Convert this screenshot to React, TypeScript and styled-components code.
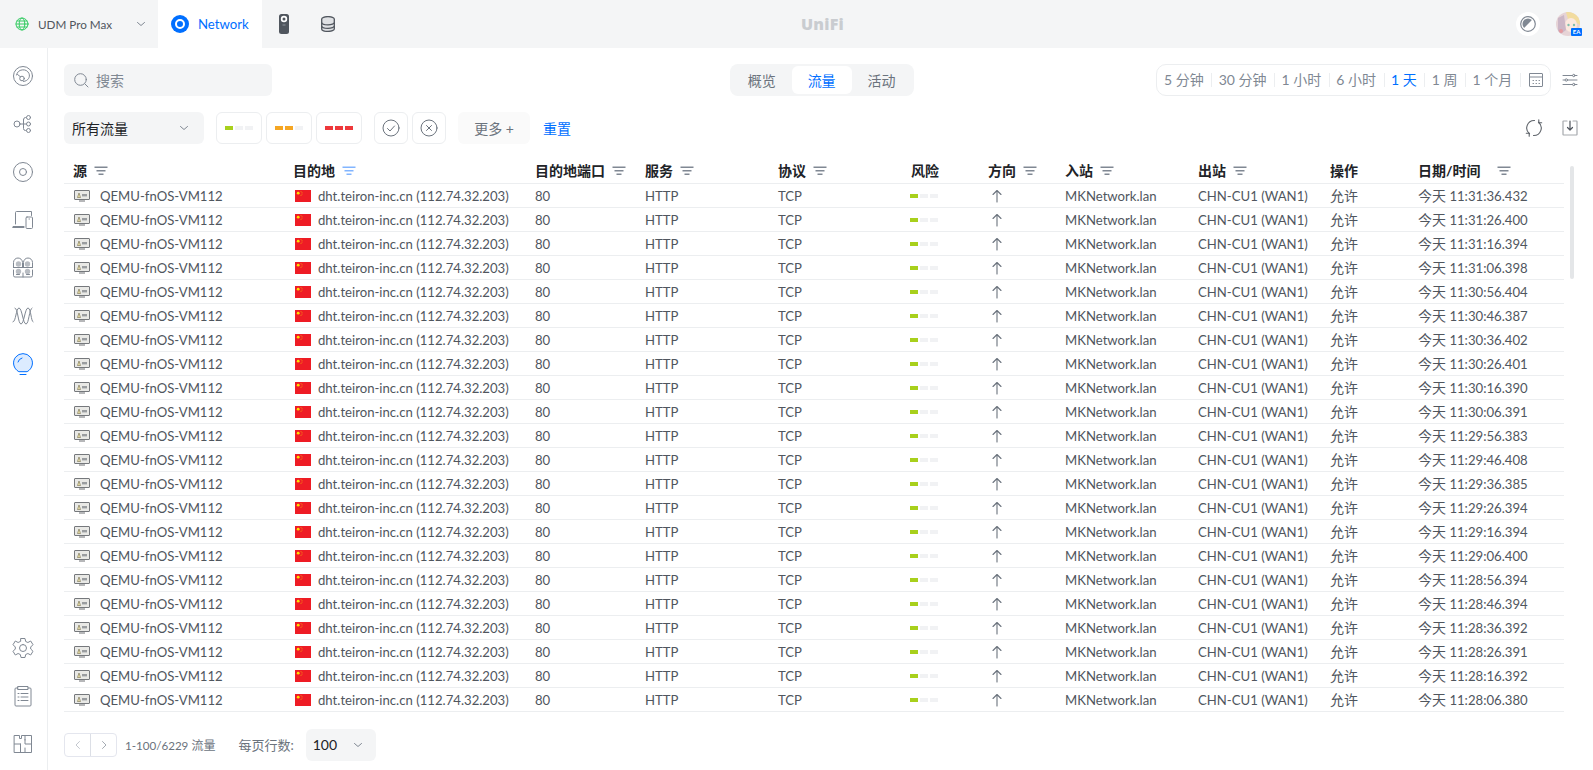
import React, { FC, ReactNode } from "react"
import styled, { createGlobalStyle } from "styled-components"

const GlobalStyle = createGlobalStyle`
  html, body {
    margin: 0;
    height: 100%;
    overflow: hidden;
    background: #fff;
  }
  body {
    font-family: Lato, "Noto Sans CJK SC", sans-serif;
    font-size: 14px;
    color: #50565e;
  }
  * {
    box-sizing: border-box;
  }
`

const Page = styled.div`
  width: 1593px;
  height: 770px;
  display: flex;
  flex-direction: column;
`

const TopBar = styled.header`
  height: 48px;
  flex: none;
  display: flex;
  align-items: center;
  background: #f4f5f6;
`

const SiteSwitch = styled.div`
  width: 158px;
  height: 100%;
  display: flex;
  align-items: center;
  padding-left: 15px;
  color: #50565e;
  font-size: 11.7px;
`

const SiteName = styled.span`
  margin-left: 9px;
  flex: 1;
`

const SiteChevron = styled.span`
  display: flex;
  margin-right: 11px;
`

const ActiveApp = styled.div`
  width: 104px;
  height: 100%;
  background: #fff;
  display: flex;
  align-items: center;
  gap: 9px;
  padding-left: 13px;
  color: #006fff;
  font-size: 13.2px;
`

const AppIcon = styled.div`
  display: flex;
  margin-left: 17px;
  & + & {
    margin-left: 32px;
  }
`

const Logo = styled.div`
  flex: 1;
  text-align: center;
  font-family: "Open Sans", sans-serif;
  font-weight: 800;
  font-size: 16px;
  letter-spacing: 0.2px;
  color: #c9ccd0;
  padding-right: 206px;
`

const ThemeButton = styled.div`
  width: 24px;
  height: 24px;
  border-radius: 50%;
  background: #fff;
  display: flex;
  align-items: center;
  justify-content: center;
  margin-right: 16px;
`

const Avatar = styled.div`
  position: relative;
  width: 24px;
  height: 24px;
  margin-right: 13px;
`

const AvatarBadge = styled.span`
  position: absolute;
  right: -2px;
  bottom: 0;
  width: 11px;
  height: 8px;
  border-radius: 1px;
  background: #006fff;
  color: #fff;
  font-size: 6px;
  font-weight: 700;
  line-height: 8px;
  text-align: center;
`

const Body = styled.div`
  flex: 1;
  display: flex;
  min-height: 0;
`

const SideNav = styled.nav`
  width: 48px;
  flex: none;
  border-right: 1px solid #eceef0;
  display: flex;
  flex-direction: column;
  justify-content: space-between;
  padding: 16px 0 14px;
`

const NavGroup = styled.div`
  display: flex;
  flex-direction: column;
  gap: 24px;
`

const NavItem = styled.div`
  height: 24px;
  display: flex;
  align-items: center;
  justify-content: center;
  padding-right: 1px;
`

const Main = styled.main`
  flex: 1;
  min-width: 0;
  padding: 16px 15px 0 16px;
  display: flex;
  flex-direction: column;
`

const ToolRow = styled.div`
  height: 32px;
  display: flex;
  align-items: center;
  flex: none;
`

const SearchBox = styled.div`
  width: 208px;
  height: 32px;
  border-radius: 6px;
  background: #f4f5f6;
  display: flex;
  align-items: center;
  gap: 7px;
  padding-left: 9px;
  color: #808893;
`

const Segments = styled.div`
  width: 184px;
  height: 32px;
  margin-left: 458px;
  border-radius: 8px;
  background: #f4f5f6;
  display: flex;
  align-items: center;
  padding: 2px;
`

const Segment = styled.div<{ $active?: boolean }>`
  flex: 1;
  height: 28px;
  display: flex;
  align-items: center;
  justify-content: center;
  border-radius: 6px;
  background: ${p => (p.$active ? "#fff" : "transparent")};
  color: ${p => (p.$active ? "#006fff" : "#6b737d")};
`

const RangeBox = styled.div`
  width: 396px;
  height: 32px;
  margin-left: 242px;
  border: 1px solid #eceef0;
  border-radius: 10px;
  display: flex;
  align-items: center;
  padding-left: 1px;
`

const RangeItem = styled.span<{ $active?: boolean }>`
  height: 14px;
  line-height: 14px;
  padding: 0 7.5px 0 6.5px;
  white-space: nowrap;
  border-right: 1px solid #eceef0;
  color: ${p => (p.$active ? "#006fff" : "#808893")};
`

const RangeIcon = styled.span`
  display: flex;
  margin-left: 7px;
`

const TuneIcon = styled.span`
  display: flex;
  margin-left: 11px;
`

const FilterRow = styled(ToolRow)`
  margin-top: 16px;
`

const TrafficSelect = styled.div`
  width: 140px;
  height: 32px;
  margin-right: 12px;
  border-radius: 6px;
  background: #f4f5f6;
  display: flex;
  align-items: center;
  justify-content: space-between;
  padding: 0 14px 0 8px;
  color: #212327;
`

const RiskButton = styled.div`
  width: 46px;
  height: 32px;
  margin-right: 4px;
  border: 1px solid #eceef0;
  border-radius: 6px;
  display: flex;
  align-items: center;
  justify-content: center;
`

const RiskBars = styled.div`
  display: flex;
  gap: 2px;
`

const RiskBar = styled.span<{ $color: string }>`
  width: 8px;
  height: 4px;
  background: ${p => p.$color};
`

const RoundButton = styled.div<{ $first?: boolean }>`
  width: 34px;
  height: 32px;
  margin-left: ${p => (p.$first ? "8px" : "4px")};
  border: 1px solid #eceef0;
  border-radius: 6px;
  display: flex;
  align-items: center;
  justify-content: center;
`

const MoreButton = styled.div`
  width: 72px;
  height: 32px;
  margin-left: 12px;
  border-radius: 6px;
  background: #fafafa;
  display: flex;
  align-items: center;
  justify-content: center;
  color: #6b737d;
`

const ResetLink = styled.span`
  margin-left: 13px;
  color: #006fff;
`

const ActionIcons = styled.div`
  margin-left: auto;
  display: flex;
  align-items: center;
  gap: 19px;
`

const TableArea = styled.div`
  margin-top: 15px;
  display: flex;
  flex: none;
`

const Table = styled.table`
  width: 1500px;
  table-layout: fixed;
  border-collapse: collapse;
`

const HeadCell = styled.th`
  height: 24px;
  padding: 0 0 0 9px;
  text-align: left;
  font-weight: 700;
  font-size: 14px;
  line-height: 16px;
  color: #212327;
  border-bottom: 1px solid #eceef0;
  white-space: nowrap;
`

const HeadInner = styled.span`
  display: inline-flex;
  align-items: center;
  gap: 7px;
`

const Cell = styled.td`
  height: 24px;
  padding: 1px 0 0 9px;
  border-bottom: 1px solid #eceef0;
  white-space: nowrap;
  font-size: 13.15px;
  line-height: 16px;
`

const CellInner = styled.span`
  display: flex;
  align-items: center;
  gap: 7px;
`

const SourceInner = styled(CellInner)`
  padding-left: 1px;
`

const SourceName = styled.span`
  margin-left: 3px;
`

const FlagSlot = styled.span`
  display: flex;
  margin-left: 2px;
`

const RiskSlot = styled.span`
  display: flex;
  margin-left: -1px;
`

const ArrowSlot = styled.span`
  display: flex;
  margin-left: 2px;
`

const Han = styled.span`
  font-size: 14px;
  line-height: 16px;
`

const Scrollbar = styled.div`
  width: 4px;
  height: 113px;
  margin: 7px 0 0 6px;
  border-radius: 2px;
  background: #e4e6e8;
`

const Footer = styled.div`
  margin-top: 17px;
  height: 32px;
  flex: none;
  display: flex;
  align-items: center;
  font-size: 13px;
`

const Pager = styled.div`
  width: 53px;
  height: 24px;
  border: 1px solid #e4e6ee;
  border-radius: 4px;
  display: flex;
`

const PagerButton = styled.span<{ $right?: boolean }>`
  flex: 1;
  display: flex;
  align-items: center;
  justify-content: center;
  border-left: ${p => (p.$right ? "1px solid #dcdfe6" : "none")};
`

const PageCount = styled.span`
  margin-left: 8px;
  color: #6b737d;
  font-size: 12px;
`

const PageNumbers = styled.span`
  font-size: 11.6px;
`

const PageLabel = styled.span`
  margin-left: 23px;
  color: #6b737d;
`

const PageSize = styled.div`
  width: 70px;
  height: 32px;
  margin-left: 12px;
  border-radius: 6px;
  background: #f4f5f6;
  display: flex;
  align-items: center;
  justify-content: space-between;
  padding: 0 12px 0 7px;
  color: #212327;
  font-size: 14px;
`

const Stroke: FC<{ size?: number; color?: string; sw?: number; children: ReactNode }> = ({
  size = 24,
  color = "#808893",
  sw = 1,
  children,
}) => (
  <svg
    width={size}
    height={size}
    viewBox={`0 0 ${size} ${size}`}
    fill="none"
    stroke={color}
    strokeWidth={sw}
    strokeLinecap="round"
    strokeLinejoin="round"
  >
    {children}
  </svg>
)

const Chevron: FC<{ color?: string }> = ({ color = "#808893" }) => (
  <Stroke size={12} color={color}>
    <path d="M2.500 4.500 6 7.500l3.500-3" />
  </Stroke>
)

const FilterIcon: FC<{ color?: string }> = ({ color = "#808893" }) => (
  <svg width="14" height="12" viewBox="0 0 14 12" fill={color}>
    <rect x="0.500" y="1.500" width="13" height="1.500" />
    <rect x="2.500" y="5" width="9" height="1.500" />
    <rect x="4.500" y="8.500" width="5" height="1.500" />
  </svg>
)

const DeviceIcon = () => (
  <svg width="16" height="12" viewBox="0 0 16 12">
    <rect x="0.500" y="0.500" width="15" height="9" rx="0.500" fill="#e9e9e6" stroke="#75787c" />
    <path d="M3.500 7.500 5 3l1.500 4.500z" fill="#f5e9b0" stroke="#6f6a4a" strokeWidth="0.600" />
    <rect x="8" y="4" width="5" height="2.400" fill="#9a9da0" />
    <rect x="5" y="10.500" width="6" height="1" fill="#6e7175" />
  </svg>
)

const FlagIcon = () => (
  <svg width="16" height="12" viewBox="0 0 16 12">
    <rect width="16" height="12" fill="#ee1c25" />
    <circle cx="3.200" cy="3.200" r="1.400" fill="#ffde00" />
    <circle cx="6" cy="1.400" r="0.450" fill="#ffde00" />
    <circle cx="7" cy="2.600" r="0.450" fill="#ffde00" />
    <circle cx="7" cy="4" r="0.450" fill="#ffde00" />
    <circle cx="6" cy="5.200" r="0.450" fill="#ffde00" />
  </svg>
)

const Risk: FC<{ level: 1 | 2 | 3 }> = ({ level }) => {
  const color = level === 1 ? "#a8d01c" : level === 2 ? "#f5a623" : "#ee383b"
  return (
    <RiskBars>
      {[1, 2, 3].map(i => (
        <RiskBar key={i} $color={i <= level ? color : "#f1f2f4"} />
      ))}
    </RiskBars>
  )
}

const columns = [
  { title: "源", width: 220, filter: true },
  { title: "目的地", width: 242, filter: true, active: true },
  { title: "目的地端口", width: 110, filter: true },
  { title: "服务", width: 133, filter: true },
  { title: "协议", width: 133, filter: true },
  { title: "风险", width: 77 },
  { title: "方向", width: 77, filter: true },
  { title: "入站", width: 133, filter: true },
  { title: "出站", width: 132, filter: true },
  { title: "操作", width: 88 },
  { title: "日期/时间", width: 155, filter: true, wide: true },
]

const times = [
  "11:31:36.432", "11:31:26.400", "11:31:16.394", "11:31:06.398", "11:30:56.404", "11:30:46.387",
  "11:30:36.402", "11:30:26.401", "11:30:16.390", "11:30:06.391", "11:29:56.383", "11:29:46.408",
  "11:29:36.385", "11:29:26.394", "11:29:16.394", "11:29:06.400", "11:28:56.394", "11:28:46.394",
  "11:28:36.392", "11:28:26.391", "11:28:16.392", "11:28:06.380",
]

const ranges = ["5 分钟", "30 分钟", "1 小时", "6 小时", "1 天", "1 周", "1 个月"]

const navTop = [
  <><circle cx="12" cy="12" r="9.500" /><path d="M5.500 11a6.700 6.700 0 0 1 12.500-1.500c1.400 3.500-.8 7.500-5.500 8" /><circle cx="11" cy="14.500" r="2.300" /><path d="M9.500 12.800 6.500 10.500" /></>,
  <><circle cx="6" cy="12" r="3" /><path d="M9 12h3.500M12.500 7.500v9a2 2 0 0 0 2 2h.5M12.500 7.500a2 2 0 0 1 2-2h.5M12.500 12h2.500" /><circle cx="17.500" cy="5.500" r="2" /><circle cx="17.500" cy="12" r="2" /><circle cx="17.500" cy="18.500" r="2" /></>,
  <><circle cx="12" cy="12" r="9.500" /><circle cx="12" cy="12" r="3.500" /></>,
  <><path d="M4.500 16V4.500a1 1 0 0 1 1-1h15v4" /><path d="M2 19.500h11M2 19.500v-1h11" /><rect x="15" y="9" width="6.500" height="11.500" rx="1" /><path d="M18 11h.5" /></>,
  <>
    <g fill="#b9bdc3" stroke="none">
      <circle cx="7.500" cy="8" r="2.700" />
      <circle cx="16.500" cy="8" r="2.700" />
      <circle cx="7.500" cy="15.500" r="2.700" />
      <circle cx="16.500" cy="15.500" r="2.700" />
    </g>
    <path d="M2.500 11.500V6.500a4.500 4.500 0 0 1 9 0v5M12.500 11.500V6.500a4.500 4.500 0 0 1 9 0v5" />
    <path d="M2.500 11.500h19" />
    <path d="M2.500 14v5.500a1.500 1.500 0 0 0 1.500 1.500h16a1.500 1.500 0 0 0 1.500-1.500V14M12 17v4" />
    <path d="M5.500 18.500h3M15.500 18.500h3" />
  </>,
  <><path d="M2 18c3 0 3-14 6-14s4 16 7 16 3-15 6-16" /><path d="M4 4c3 0 3 16 6 16s4-16 7-16 3 14 5 14" /></>,
]

const navBottom = [
  <path d="M10 2.500h4l.7 3 2.200 1 2.800-1.500 2.300 3.700-2.300 2.300v2l2.300 2.300-2.300 3.700-2.800-1.500-2.200 1-.7 3h-4l-.7-3-2.200-1-2.800 1.500-2.300-3.700L4.300 13v-2L2 8.700l2.300-3.700 2.800 1.500 2.200-1zM12 8.500a3.500 3.500 0 1 0 0 7 3.500 3.500 0 0 0 0-7z" />,
  <><path d="M7 4H5a1 1 0 0 0-1 1v16a1 1 0 0 0 1 1h14a1 1 0 0 0 1-1V5a1 1 0 0 0-1-1h-2" /><rect x="7" y="2.500" width="10" height="3" /><path d="M7 9.500h1M10 9.500h7M7 13h1M10 13h7M7 16.500h1M10 16.500h7" /></>,
  <path d="M3.500 3.500h5v3h2v-3h10v17h-17zM3.500 12h6M9.500 12v8.500M14 3.500v8.500h6.500M14 8v-.5M14 16v4.500" />,
]

export default function App() {
  return (
    <Page>
      <GlobalStyle />
      <TopBar>
        <SiteSwitch>
          <Stroke size={14} color="#38cc65">
            <circle cx="7" cy="7" r="6" />
            <ellipse cx="7" cy="7" rx="2.800" ry="6" />
            <path d="M1 7h12M2 4h10M2 10h10" />
          </Stroke>
          <SiteName>UDM Pro Max</SiteName>
          <SiteChevron>
            <Chevron />
          </SiteChevron>
        </SiteSwitch>
        <ActiveApp>
          <svg width="18" height="18" viewBox="0 0 18 18">
            <circle cx="9" cy="9" r="9" fill="#006fff" />
            <circle cx="9" cy="9" r="4" fill="none" stroke="#fff" strokeWidth="2" />
          </svg>
          Network
        </ActiveApp>
        <AppIcon>
          <svg width="10" height="20" viewBox="0 0 10 20">
            <rect width="10" height="20" rx="2.500" fill="#50565e" />
            <circle cx="5" cy="5" r="3.200" fill="#fff" />
            <circle cx="5" cy="5" r="1.500" fill="#50565e" />
            <rect x="3.500" y="10.500" width="3" height="1" fill="#8e959d" />
          </svg>
        </AppIcon>
        <AppIcon>
          <svg width="14" height="16" viewBox="0 0 14 16" fill="#dfe1e4" stroke="#50565e" strokeWidth="1.300">
            <ellipse cx="7" cy="3" rx="6.300" ry="2.400" />
            <path d="M.7 3v10c0 1.300 2.800 2.400 6.300 2.400s6.300-1.100 6.300-2.400V3" />
            <path d="M.7 6.500c0 1.300 2.800 2.400 6.300 2.400s6.300-1.100 6.300-2.400M.7 10c0 1.300 2.800 2.400 6.300 2.400s6.300-1.100 6.300-2.400" fill="none" />
          </svg>
        </AppIcon>
        <Logo>UniFi</Logo>
        <ThemeButton>
          <svg width="16" height="16" viewBox="0 0 16 16">
            <circle cx="8" cy="8" r="7.300" fill="none" stroke="#808893" strokeWidth="1.200" />
            <path d="M4.100 11.900A5.500 5.500 0 0 1 11.900 4.100z" fill="#808893" />
          </svg>
        </ThemeButton>
        <Avatar>
          <svg width="24" height="24" viewBox="0 0 24 24">
            <defs>
              <clipPath id="avatar-clip">
                <circle cx="12" cy="12" r="12" />
              </clipPath>
            </defs>
            <g clipPath="url(#avatar-clip)">
              <rect width="24" height="24" fill="#e6d3d6" />
              <path d="M10 0h14v13l-5-3-6 1z" fill="#f2dc9f" />
              <ellipse cx="15" cy="13" rx="6" ry="7" fill="#fbe8de" />
              <circle cx="12.500" cy="13" r="1.200" fill="#7fbfae" />
              <circle cx="18" cy="13" r="1.200" fill="#7fbfae" />
              <path d="M2 6l6-3 2 15-8 6z" fill="#cbb6c6" />
              <circle cx="5" cy="19" r="2" fill="#e59aa0" />
            </g>
          </svg>
          <AvatarBadge>EA</AvatarBadge>
        </Avatar>
      </TopBar>
      <Body>
        <SideNav>
          <NavGroup>
            {navTop.map((icon, i) => (
              <NavItem key={i}>
                <Stroke>{icon}</Stroke>
              </NavItem>
            ))}
            <NavItem>
              <Stroke color="#006fff">
                <path d="M7.500 19.500a9.500 9.500 0 1 1 9 0z" fill="#dcebff" />
                <path d="M9 22.500h6" />
                <path d="M7 10a5.500 5.500 0 0 1 4-4" />
              </Stroke>
            </NavItem>
          </NavGroup>
          <NavGroup>
            {navBottom.map((icon, i) => (
              <NavItem key={i}>
                <Stroke>{icon}</Stroke>
              </NavItem>
            ))}
          </NavGroup>
        </SideNav>
        <Main>
          <ToolRow>
            <SearchBox>
              <Stroke size={16} color="#808893">
                <circle cx="7.500" cy="7.500" r="5.800" />
                <path d="m12 12 3 3" />
              </Stroke>
              搜索
            </SearchBox>
            <Segments>
              <Segment>概览</Segment>
              <Segment $active>流量</Segment>
              <Segment>活动</Segment>
            </Segments>
            <RangeBox>
              {ranges.map(r => (
                <RangeItem key={r} $active={r === "1 天"}>
                  {r}
                </RangeItem>
              ))}
              <RangeIcon>
                <Stroke size={16}>
                  <rect x="1.500" y="1.500" width="13" height="13" rx="0.500" />
                  <path d="M1.500 5h13M5 8.500h.5M8 8.500h.5M11 8.500h.5M5 11.500h.5M8 11.500h.5M11 11.500h.5" />
                </Stroke>
              </RangeIcon>
            </RangeBox>
            <TuneIcon>
              <Stroke size={16}>
                <path d="M1 3.500h9.500M13 3.500h2M1 8h2M5.500 8H15M1 12.500h9.500M13 12.500h2" />
                <circle cx="11.800" cy="3.500" r="1.200" />
                <circle cx="4.300" cy="8" r="1.200" />
                <circle cx="11.800" cy="12.500" r="1.200" />
              </Stroke>
            </TuneIcon>
          </ToolRow>
          <FilterRow>
            <TrafficSelect>
              所有流量
              <Chevron />
            </TrafficSelect>
            <RiskButton>
              <Risk level={1} />
            </RiskButton>
            <RiskButton>
              <Risk level={2} />
            </RiskButton>
            <RiskButton>
              <Risk level={3} />
            </RiskButton>
            <RoundButton $first>
              <Stroke size={18} color="#6b737d">
                <circle cx="9" cy="9" r="8" />
                <path d="m5.500 9.500 2.500 2.500 4.500-5" />
              </Stroke>
            </RoundButton>
            <RoundButton>
              <Stroke size={18} color="#6b737d">
                <circle cx="9" cy="9" r="8" />
                <path d="m6.500 6.500 5 5M11.500 6.500l-5 5" />
              </Stroke>
            </RoundButton>
            <MoreButton>更多 +</MoreButton>
            <ResetLink>重置</ResetLink>
            <ActionIcons>
              <Stroke size={18} color="#5e636a" sw={1.100}>
                <path d="M13.500 3.200A7.500 7.500 0 0 1 8.500 16.500M4.500 14.800A7.500 7.500 0 0 1 9.500 1.500" />
                <path d="M13.800 .8v2.900h2.900M4.200 17.200v-2.900H1.300" />
              </Stroke>
              <Stroke size={16} color="#a6a9ad" sw={1.200}>
                <path d="M5 1H1.500a.5.500 0 0 0-.5.500v13a.5.500 0 0 0 .5.500h13a.5.500 0 0 0 .5-.500v-13a.5.500 0 0 0-.5-.500H11" />
                <path d="M8 1v8.500M5.500 7.500 8 10l2.500-2.500" stroke="#50565e" />
              </Stroke>
            </ActionIcons>
          </FilterRow>
          <TableArea>
            <Table>
              <colgroup>
                {columns.map(c => (
                  <col key={c.title} width={c.width} />
                ))}
              </colgroup>
              <thead>
                <tr>
                  {columns.map(c => (
                    <HeadCell key={c.title}>
                      <HeadInner>
                        {c.title}
                        {c.wide && <span style={{ width: 2 }} />}
                        {c.filter && <FilterIcon color={c.active ? "#82b5ff" : "#808893"} />}
                      </HeadInner>
                    </HeadCell>
                  ))}
                </tr>
              </thead>
              <tbody>
                {times.map(t => (
                  <tr key={t}>
                    <Cell>
                      <SourceInner>
                        <DeviceIcon />
                        <SourceName>QEMU-fnOS-VM112</SourceName>
                      </SourceInner>
                    </Cell>
                    <Cell>
                      <CellInner>
                        <FlagSlot>
                          <FlagIcon />
                        </FlagSlot>
                        dht.teiron-inc.cn (112.74.32.203)
                      </CellInner>
                    </Cell>
                    <Cell>80</Cell>
                    <Cell>HTTP</Cell>
                    <Cell>TCP</Cell>
                    <Cell>
                      <RiskSlot>
                        <Risk level={1} />
                      </RiskSlot>
                    </Cell>
                    <Cell>
                      <ArrowSlot>
                        <Stroke size={14} color="#6b737d" sw={1.100}>
                          <path d="M7 13V1.500M3 5.500 7 1.500l4 4" />
                        </Stroke>
                      </ArrowSlot>
                    </Cell>
                    <Cell>MKNetwork.lan</Cell>
                    <Cell>CHN-CU1 (WAN1)</Cell>
                    <Cell>
                      <Han>允许</Han>
                    </Cell>
                    <Cell>
                      <Han>今天</Han> {t}
                    </Cell>
                  </tr>
                ))}
              </tbody>
            </Table>
            <Scrollbar />
          </TableArea>
          <Footer>
            <Pager>
              <PagerButton>
                <Stroke size={12} color="#c4c8cf">
                  <path d="M7.500 2.500 4 6l3.500 3.500" />
                </Stroke>
              </PagerButton>
              <PagerButton $right>
                <Stroke size={12} color="#a5abb3">
                  <path d="M4.500 2.500 8 6 4.500 9.500" />
                </Stroke>
              </PagerButton>
            </Pager>
            <PageCount>
              <PageNumbers>1-100/6229</PageNumbers> 流量
            </PageCount>
            <PageLabel>每页行数:</PageLabel>
            <PageSize>
              100
              <Chevron />
            </PageSize>
          </Footer>
        </Main>
      </Body>
    </Page>
  )
}
